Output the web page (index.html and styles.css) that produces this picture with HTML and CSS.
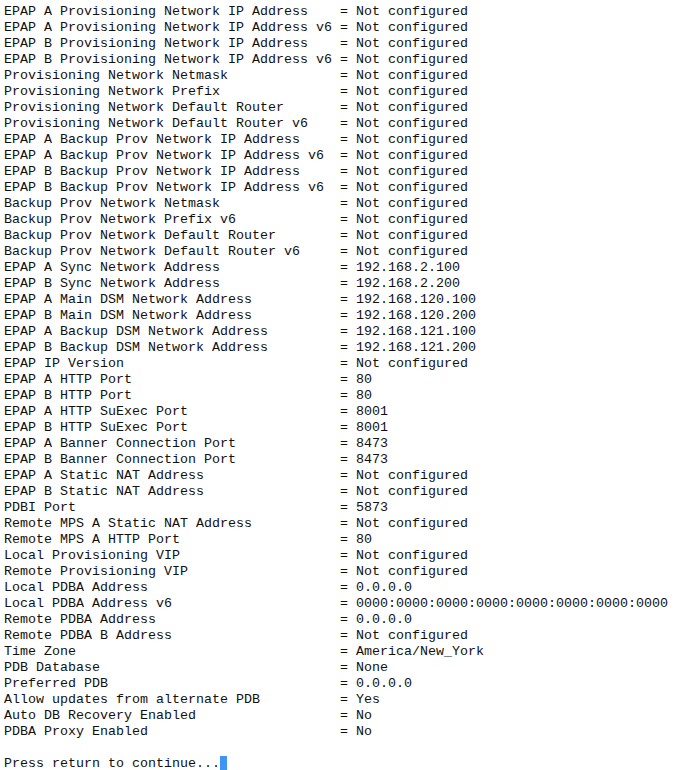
FILE: index.html
```html
<!DOCTYPE html>
<html>
<head>
<meta charset="utf-8">
<link rel="stylesheet" href="styles.css">
</head>
<body>
<div class="term">
<div class="row"><span class="k">EPAP A Provisioning Network IP Address</span><span class="v">= Not configured</span></div>
<div class="row"><span class="k">EPAP A Provisioning Network IP Address v6</span><span class="v">= Not configured</span></div>
<div class="row"><span class="k">EPAP B Provisioning Network IP Address</span><span class="v">= Not configured</span></div>
<div class="row"><span class="k">EPAP B Provisioning Network IP Address v6</span><span class="v">= Not configured</span></div>
<div class="row"><span class="k">Provisioning Network Netmask</span><span class="v">= Not configured</span></div>
<div class="row"><span class="k">Provisioning Network Prefix</span><span class="v">= Not configured</span></div>
<div class="row"><span class="k">Provisioning Network Default Router</span><span class="v">= Not configured</span></div>
<div class="row"><span class="k">Provisioning Network Default Router v6</span><span class="v">= Not configured</span></div>
<div class="row"><span class="k">EPAP A Backup Prov Network IP Address</span><span class="v">= Not configured</span></div>
<div class="row"><span class="k">EPAP A Backup Prov Network IP Address v6</span><span class="v">= Not configured</span></div>
<div class="row"><span class="k">EPAP B Backup Prov Network IP Address</span><span class="v">= Not configured</span></div>
<div class="row"><span class="k">EPAP B Backup Prov Network IP Address v6</span><span class="v">= Not configured</span></div>
<div class="row"><span class="k">Backup Prov Network Netmask</span><span class="v">= Not configured</span></div>
<div class="row"><span class="k">Backup Prov Network Prefix v6</span><span class="v">= Not configured</span></div>
<div class="row"><span class="k">Backup Prov Network Default Router</span><span class="v">= Not configured</span></div>
<div class="row"><span class="k">Backup Prov Network Default Router v6</span><span class="v">= Not configured</span></div>
<div class="row"><span class="k">EPAP A Sync Network Address</span><span class="v">= 192.168.2.100</span></div>
<div class="row"><span class="k">EPAP B Sync Network Address</span><span class="v">= 192.168.2.200</span></div>
<div class="row"><span class="k">EPAP A Main DSM Network Address</span><span class="v">= 192.168.120.100</span></div>
<div class="row"><span class="k">EPAP B Main DSM Network Address</span><span class="v">= 192.168.120.200</span></div>
<div class="row"><span class="k">EPAP A Backup DSM Network Address</span><span class="v">= 192.168.121.100</span></div>
<div class="row"><span class="k">EPAP B Backup DSM Network Address</span><span class="v">= 192.168.121.200</span></div>
<div class="row"><span class="k">EPAP IP Version</span><span class="v">= Not configured</span></div>
<div class="row"><span class="k">EPAP A HTTP Port</span><span class="v">= 80</span></div>
<div class="row"><span class="k">EPAP B HTTP Port</span><span class="v">= 80</span></div>
<div class="row"><span class="k">EPAP A HTTP SuExec Port</span><span class="v">= 8001</span></div>
<div class="row"><span class="k">EPAP B HTTP SuExec Port</span><span class="v">= 8001</span></div>
<div class="row"><span class="k">EPAP A Banner Connection Port</span><span class="v">= 8473</span></div>
<div class="row"><span class="k">EPAP B Banner Connection Port</span><span class="v">= 8473</span></div>
<div class="row"><span class="k">EPAP A Static NAT Address</span><span class="v">= Not configured</span></div>
<div class="row"><span class="k">EPAP B Static NAT Address</span><span class="v">= Not configured</span></div>
<div class="row"><span class="k">PDBI Port</span><span class="v">= 5873</span></div>
<div class="row"><span class="k">Remote MPS A Static NAT Address</span><span class="v">= Not configured</span></div>
<div class="row"><span class="k">Remote MPS A HTTP Port</span><span class="v">= 80</span></div>
<div class="row"><span class="k">Local Provisioning VIP</span><span class="v">= Not configured</span></div>
<div class="row"><span class="k">Remote Provisioning VIP</span><span class="v">= Not configured</span></div>
<div class="row"><span class="k">Local PDBA Address</span><span class="v">= 0.0.0.0</span></div>
<div class="row"><span class="k">Local PDBA Address v6</span><span class="v">= 0000:0000:0000:0000:0000:0000:0000:0000</span></div>
<div class="row"><span class="k">Remote PDBA Address</span><span class="v">= 0.0.0.0</span></div>
<div class="row"><span class="k">Remote PDBA B Address</span><span class="v">= Not configured</span></div>
<div class="row"><span class="k">Time Zone</span><span class="v">= America/New_York</span></div>
<div class="row"><span class="k">PDB Database</span><span class="v">= None</span></div>
<div class="row"><span class="k">Preferred PDB</span><span class="v">= 0.0.0.0</span></div>
<div class="row"><span class="k">Allow updates from alternate PDB</span><span class="v">= Yes</span></div>
<div class="row"><span class="k">Auto DB Recovery Enabled</span><span class="v">= No</span></div>
<div class="row"><span class="k">PDBA Proxy Enabled</span><span class="v">= No</span></div>
<div class="row blank"></div>
<div class="row"><span class="v">Press return to continue...</span><span class="cursor"></span></div>
</div>
</body>
</html>
```
FILE: styles.css
```css
html, body {
  margin: 0;
  padding: 0;
  background: #ffffff;
}
.term {
  padding: 4px 0 0 4px;
  font-family: "Liberation Mono", "Courier New", monospace;
  font-size: 13.333px;
  line-height: 16px;
  color: #111111;
}
.row {
  display: flex;
  height: 16px;
  white-space: pre;
}
.k {
  width: 336px;
  flex: none;
}
.v {
  flex: none;
}
.cursor {
  display: inline-block;
  width: 7px;
  height: 16px;
  background: #3d97f2;
}
```
